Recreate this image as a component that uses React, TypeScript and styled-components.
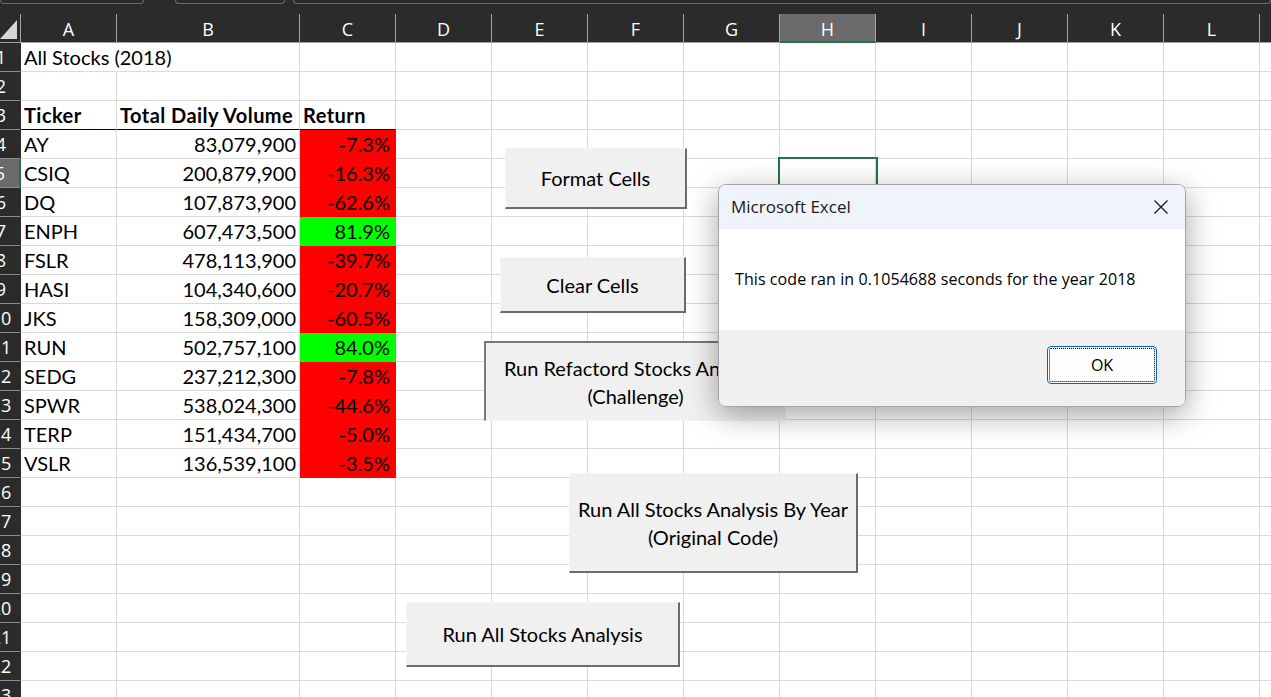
import React from "react";
import styled, { createGlobalStyle, css } from "styled-components";

const GlobalStyle = createGlobalStyle`
  html, body { margin: 0; padding: 0; background: #ffffff; overflow: hidden; }
`;

const HEADER_BG = "#2b2b2b";
const ACTIVE_BG = "#6b6b6b";
const EXCEL_GREEN = "#217346";
const GRID = "#dadada";

const Page = styled.div`
  position: relative;
  width: 1271px;
  height: 697px;
  overflow: hidden;
  background: #ffffff;
  font-family: Lato, "Liberation Sans", sans-serif;
`;

const TabStrip = styled.div`
  height: 14px;
  background: ${HEADER_BG};
  display: flex;
  align-items: flex-start;
`;

const Tab = styled.div<{ $w?: number; $gap: number }>`
  box-sizing: border-box;
  height: 4px;
  margin-left: ${(p) => p.$gap}px;
  ${(p) => (p.$w ? css`width: ${p.$w}px;` : css`flex: 1;`)}
  border: 1px solid #6c6c6c;
  border-top: none;
  border-radius: 0 0 5px 5px;
`;

const Sheet = styled.div`
  display: grid;
  grid-template-columns: 21px 96px 183px repeat(11, 96px);
  grid-auto-rows: 29px;
  width: max-content;
`;

const Corner = styled.div`
  box-sizing: border-box;
  background: ${HEADER_BG};
  border-right: 1px solid #a5a5a5;
  border-bottom: 1px solid #a0a0a0;
  display: flex;
  align-items: flex-end;
  justify-content: flex-end;
  padding: 0 3px 3px 0;
`;

const SelectAll = styled.div`
  width: 0;
  height: 0;
  border-left: 17px solid transparent;
  border-bottom: 19px solid #d6d6d6;
`;

const ColHead = styled.div<{ $active?: boolean }>`
  box-sizing: border-box;
  background: ${(p) => (p.$active ? ACTIVE_BG : HEADER_BG)};
  border-right: 1px solid #a5a5a5;
  border-bottom: ${(p) => (p.$active ? `2px solid ${EXCEL_GREEN}` : "1px solid #a0a0a0")};
  color: #ffffff;
  font-family: "Open Sans", "Noto Sans", sans-serif;
  font-size: 18px;
  display: flex;
  align-items: center;
  justify-content: center;
  padding-top: 2px;
`;

const RowHead = styled.div<{ $active?: boolean }>`
  box-sizing: border-box;
  background: ${(p) => (p.$active ? ACTIVE_BG : HEADER_BG)};
  border-bottom: 1px solid #8c8c8c;
  border-right: ${(p) => (p.$active ? `2px solid ${EXCEL_GREEN}` : `1px solid ${HEADER_BG}`)};
  overflow: hidden;
  display: flex;
  align-items: center;
  justify-content: flex-end;
  color: #ffffff;
  font-family: "Open Sans", "Noto Sans", sans-serif;
  font-size: 18px;
`;

const RowNum = styled.span`
  flex: none;
  width: 38px;
  text-align: center;
`;

const Cell = styled.div<{
  $right?: boolean;
  $bold?: boolean;
  $fill?: string;
  $rule?: boolean;
  $spill?: boolean;
  $selected?: boolean;
  $pad?: number;
}>`
  box-sizing: border-box;
  background: ${(p) => p.$fill ?? "transparent"};
  border-right: 1px solid ${(p) => (p.$spill ? "transparent" : p.$fill ?? GRID)};
  border-bottom: 1px solid ${(p) => (p.$rule ? "#000000" : p.$fill ?? GRID)};
  display: flex;
  align-items: flex-end;
  justify-content: ${(p) => (p.$right ? "flex-end" : "flex-start")};
  padding: 0 ${(p) => p.$pad ?? 3}px 2px 3px;
  font-size: 20px;
  line-height: 24px;
  font-weight: ${(p) => (p.$bold ? 700 : 400)};
  letter-spacing: ${(p) => (p.$bold ? "0.45px" : "0")};
  color: #000000;
  white-space: nowrap;
  ${(p) =>
    p.$selected &&
    css`
      outline: 2px solid ${EXCEL_GREEN};
      position: relative;
      z-index: 1;
    `}
`;

const SheetButton = styled.div<{ $x: number; $y: number; $w: number; $h: number; $pressed?: boolean }>`
  position: absolute;
  z-index: 2;
  left: ${(p) => p.$x}px;
  top: ${(p) => p.$y}px;
  width: ${(p) => p.$w}px;
  height: ${(p) => p.$h}px;
  box-sizing: border-box;
  background: #f0f0f0;
  ${(p) =>
    p.$pressed
      ? css`
          border-top: 2px solid #7a7a7a;
          border-left: 2px solid #7a7a7a;
          border-right: 1px solid #f4f4f4;
          border-bottom: 1px solid #f4f4f4;
        `
      : css`
          border-top: 1px solid #f6f6f6;
          border-left: 1px solid #f6f6f6;
          border-right: 2px solid #6b6b6b;
          border-bottom: 2px solid #6b6b6b;
        `}
  display: flex;
  align-items: center;
  justify-content: center;
  text-align: center;
  font-size: 20px;
  line-height: 28px;
  color: #000000;
  white-space: pre-line;
  overflow: hidden;
`;

const Dialog = styled.div`
  position: absolute;
  z-index: 5;
  left: 718px;
  top: 184px;
  width: 468px;
  height: 223px;
  box-sizing: border-box;
  border: 1px solid #a3a3a3;
  border-radius: 8px;
  overflow: hidden;
  box-shadow: 0 8px 30px rgba(0, 0, 0, 0.36);
  display: flex;
  flex-direction: column;
  font-family: "Open Sans", "Noto Sans", sans-serif;
  color: #1a1a1a;
`;

const TitleBar = styled.div`
  height: 43px;
  flex: none;
  background: #eff3fa;
  display: flex;
  align-items: center;
  justify-content: space-between;
  padding: 0 16px 1px 12px;
  font-size: 17px;
`;

const CloseButton = styled.div`
  width: 16px;
  height: 16px;
  display: flex;
  align-items: center;
  justify-content: center;
`;

const Body = styled.div`
  flex: 1;
  background: #ffffff;
  display: flex;
  align-items: center;
  padding: 0 16px 2px 16px;
  font-size: 16px;
  letter-spacing: 0.08px;
  color: #000000;
`;

const Footer = styled.div`
  height: 76px;
  flex: none;
  background: #f0f0f0;
  display: flex;
  justify-content: flex-end;
  align-items: flex-start;
  padding: 16px 28px 0 0;
  box-sizing: border-box;
`;

const OkButton = styled.div`
  width: 110px;
  height: 38px;
  box-sizing: border-box;
  border: 1px solid #0067c0;
  border-radius: 4px;
  background: #fdfdfd;
  outline: 1px dotted #000000;
  outline-offset: -3px;
  display: flex;
  align-items: center;
  justify-content: center;
  font-size: 16px;
  color: #000000;
`;

const COLS = ["A", "B", "C", "D", "E", "F", "G", "H", "I", "J", "K", "L", "M"];

type Stock = { t: string; v: string; r: string; up: boolean };
const STOCKS: Stock[] = [
  { t: "AY", v: "83,079,900", r: "-7.3%", up: false },
  { t: "CSIQ", v: "200,879,900", r: "-16.3%", up: false },
  { t: "DQ", v: "107,873,900", r: "-62.6%", up: false },
  { t: "ENPH", v: "607,473,500", r: "81.9%", up: true },
  { t: "FSLR", v: "478,113,900", r: "-39.7%", up: false },
  { t: "HASI", v: "104,340,600", r: "-20.7%", up: false },
  { t: "JKS", v: "158,309,000", r: "-60.5%", up: false },
  { t: "RUN", v: "502,757,100", r: "84.0%", up: true },
  { t: "SEDG", v: "237,212,300", r: "-7.8%", up: false },
  { t: "SPWR", v: "538,024,300", r: "-44.6%", up: false },
  { t: "TERP", v: "151,434,700", r: "-5.0%", up: false },
  { t: "VSLR", v: "136,539,100", r: "-3.5%", up: false },
];

const ACTIVE_ROW = 5;
const ACTIVE_COL = 7; // H

function renderRow(n: number) {
  const cells: React.ReactNode[] = [];
  for (let c = 0; c < COLS.length; c++) {
    const key = `${n}-${c}`;
    const selected = n === ACTIVE_ROW && c === ACTIVE_COL;
    if (n === 1 && c === 0) {
      cells.push(
        <Cell key={key} $spill>
          All Stocks (2018)
        </Cell>
      );
    } else if (n === 3 && c < 3) {
      const labels = ["Ticker", "Total Daily Volume", "Return"];
      cells.push(
        <Cell key={key} $bold $rule>
          {labels[c]}
        </Cell>
      );
    } else if (n >= 4 && n <= 15 && c < 3) {
      const s = STOCKS[n - 4];
      if (c === 0) cells.push(<Cell key={key}>{s.t}</Cell>);
      else if (c === 1)
        cells.push(
          <Cell key={key} $right>
            {s.v}
          </Cell>
        );
      else
        cells.push(
          <Cell key={key} $right $pad={5} $fill={s.up ? "#00ff00" : "#ff0000"}>
            {s.r}
          </Cell>
        );
    } else {
      cells.push(<Cell key={key} $selected={selected} />);
    }
  }
  return (
    <React.Fragment key={`row-${n}`}>
      <RowHead $active={n === ACTIVE_ROW}>
        <RowNum>{n}</RowNum>
      </RowHead>
      {cells}
    </React.Fragment>
  );
}

export default function App() {
  const rows = Array.from({ length: 23 }, (_, i) => i + 1);
  return (
    <>
      <GlobalStyle />
      <Page>
        <TabStrip>
          <Tab $w={144} $gap={0} />
          <Tab $w={110} $gap={31} />
          <Tab $gap={8} />
        </TabStrip>
        <Sheet>
          <Corner>
            <SelectAll />
          </Corner>
          {COLS.map((c, i) => (
            <ColHead key={c} $active={i === ACTIVE_COL}>
              {c}
            </ColHead>
          ))}
          {rows.map((n) => renderRow(n))}
        </Sheet>

        <SheetButton $x={505} $y={148} $w={182} $h={61}>
          Format Cells
        </SheetButton>
        <SheetButton $x={500} $y={257} $w={186} $h={56}>
          Clear Cells
        </SheetButton>
        <SheetButton $x={484} $y={341} $w={302} $h={80} $pressed>
          {"Run Refactord Stocks Analysis\n(Challenge)"}
        </SheetButton>
        <SheetButton $x={569} $y={473} $w={289} $h={100}>
          {"Run All Stocks Analysis By Year\n(Original Code)"}
        </SheetButton>
        <SheetButton $x={406} $y={602} $w={274} $h={65}>
          Run All Stocks Analysis
        </SheetButton>

        <Dialog>
          <TitleBar>
            <span>Microsoft Excel</span>
            <CloseButton>
              <svg width="16" height="16" viewBox="0 0 16 16" fill="none">
                <path d="M1.5 1.5 L14.5 14.5 M14.5 1.5 L1.5 14.5" stroke="#1a1a1a" strokeWidth="1.3" />
              </svg>
            </CloseButton>
          </TitleBar>
          <Body>This code ran in 0.1054688 seconds for the year 2018</Body>
          <Footer>
            <OkButton>OK</OkButton>
          </Footer>
        </Dialog>
      </Page>
    </>
  );
}
